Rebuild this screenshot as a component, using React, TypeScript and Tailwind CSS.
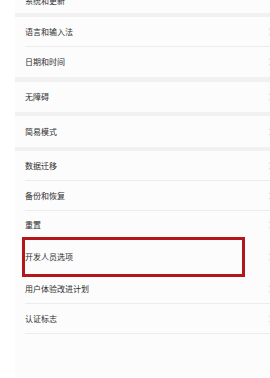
import React from "react";

// Settings list: system submenu with one highlighted row

const font = {
  fontFamily: '"Noto Sans CJK SC", "Noto Sans", sans-serif',
};

function Chevron() {
  return (
    <svg
      viewBox="0 0 6 10"
      className="w-[5px] h-[8px] -mr-[3px] shrink-0 text-[#d4d4d4]"
      fill="none"
      stroke="currentColor"
      strokeWidth={1.2}
    >
      <path d="M1 1l4 4-4 4" />
    </svg>
  );
}

function Row({
  label,
  divider = false,
  height = "h-[30px]",
}: {
  label: string;
  divider?: boolean;
  height?: string;
}) {
  return (
    <div className={`${height} flex items-center pl-[10px]`}>
      <div
        className={`flex-1 h-full flex items-center ${
          divider ? "border-b border-[#ececec]" : ""
        }`}
      >
        <span className="text-[8px] leading-none text-[#2e2e2e] flex-1">
          {label}
        </span>
        <Chevron />
      </div>
    </div>
  );
}

function Gap({ h = "h-[4px]" }: { h?: string }) {
  return <div className={`${h} bg-[#f1f1f1]`} />;
}

export default function App() {
  return (
    <div
      className="w-[270px] h-[378px] overflow-hidden bg-white pl-[15px]"
      style={font}
    >
      <div className="h-full bg-[#fcfcfc] flex flex-col">
        {/* cut-off top item */}
        <div className="h-[13px] flex items-end pl-[10px] overflow-hidden">
          <span className="text-[8px] leading-none text-[#2e2e2e] -translate-y-[8px]">
            系统和更新
          </span>
        </div>
        <Gap />
        <Row label="语言和输入法" divider />
        <Row label="日期和时间" />
        <Gap h="h-[5px]" />
        <Row label="无障碍" />
        <Gap />
        <Row label="简易模式" height="h-[31px]" />
        <Gap />
        <Row label="数据迁移" divider />
        <Row label="备份和恢复" divider />
        <Row label="重置" height="h-[28px]" />
        <div className="relative">
          <Row label="开发人员选项" height="h-[35px]" />
          {/* highlight annotation */}
          <div className="absolute left-[7px] top-[-2px] w-[223px] h-[40px] border-[3px] border-[#b3161b] pointer-events-none" />
        </div>
        <Row label="用户体验改进计划" divider />
        <Row label="认证标志" divider />
      </div>
    </div>
  );
}
